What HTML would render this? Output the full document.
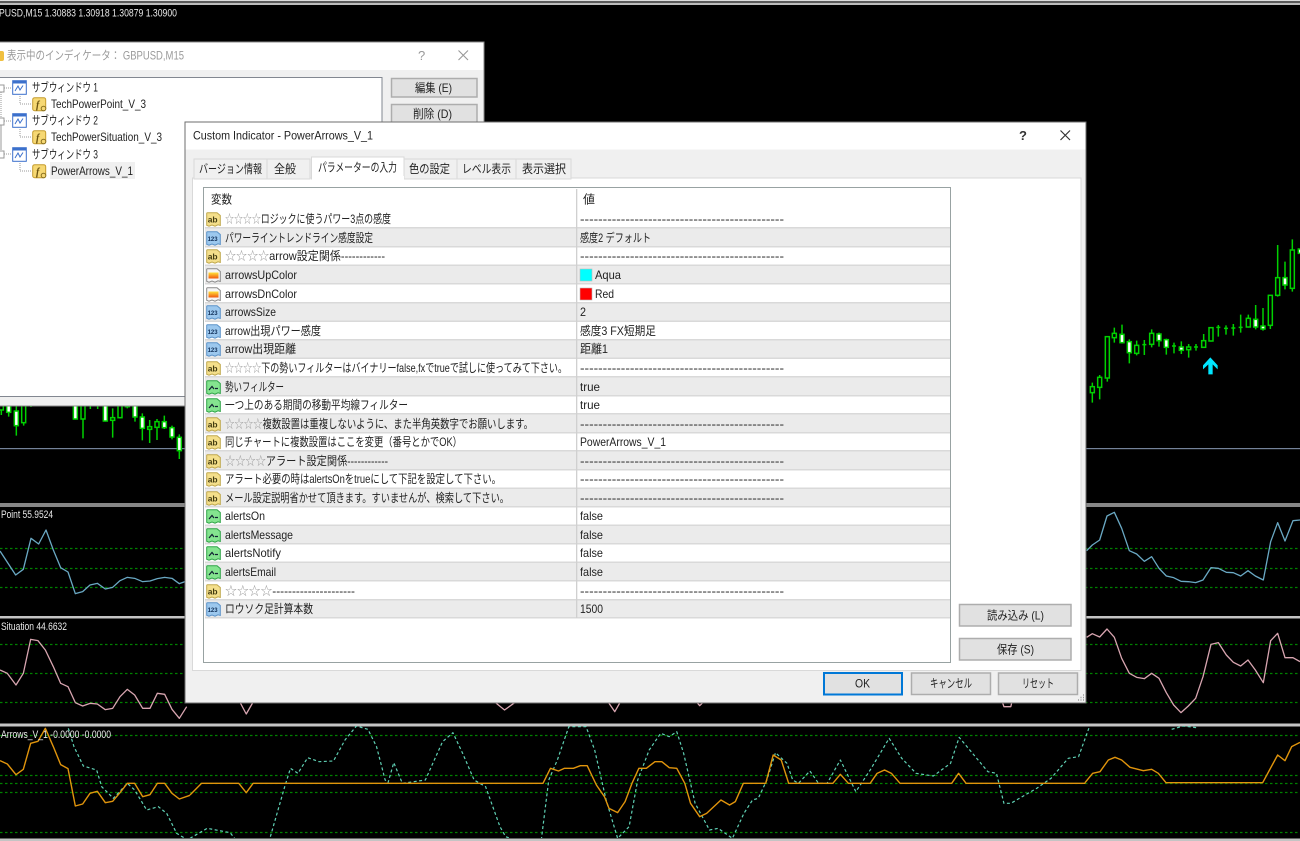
<!DOCTYPE html>
<html lang="ja"><head><meta charset="utf-8"><title>Custom Indicator - PowerArrows_V_1</title>
<style>
html,body{margin:0;padding:0;background:#000;width:1300px;height:841px;overflow:hidden}
svg{display:block;font-family:"Liberation Sans","Noto Sans CJK JP",sans-serif;font-size:12px;filter:blur(.35px)}
.l{fill:none;vector-effect:non-scaling-stroke;stroke-linejoin:round}
.g{stroke:#008000;stroke-width:1.2;stroke-dasharray:2.5 2.5}
.b{stroke:#6aa9c4;stroke-width:1.3}
.p{stroke:#d8a5b0;stroke-width:1.3}
.o{stroke:#e0940c;stroke-width:1.4}
.t{stroke:#5fd0b4;stroke-width:1.2;stroke-dasharray:3 2.5}
.w{fill:none;stroke:#00d000;stroke-width:4.5}
.h{fill:#000;stroke:#00d000;stroke-width:4.5}
.f{fill:#fff;stroke:#00d000;stroke-width:4.5}
.k text{fill:#e8e8e8;font-size:11px}
.r text,.d{fill:#222}
.btn{fill:#e1e1e1;stroke:#adadad;stroke-width:1.5}
.tab{fill:#f0f0f0;stroke:#d9d9d9}
</style></head><body>
<svg width="1300" height="841" viewBox="0 0 1300 841" xmlns="http://www.w3.org/2000/svg">
<defs>
<clipPath id="c1"><rect x="0" y="507" width="1300" height="109"/></clipPath>
<clipPath id="c2"><rect x="0" y="618" width="1300" height="105"/></clipPath>
<clipPath id="c3"><rect x="0" y="726" width="1300" height="112"/></clipPath>
<linearGradient id="gr" x1="0" y1="0" x2="0" y2="1"><stop offset="0" stop-color="#ffe23a"/><stop offset="1" stop-color="#f2560e"/></linearGradient>
<symbol id="ab" viewBox="0 0 15 15"><path d="M.7 1.5Q.7.7 1.5.7H11L14.3 3.5V13.5L12 12.8 9 14.2 6 13 3 14.2.7 13.3Z" fill="#f4df8b" stroke="#c0a84c"/><text x="1.7" y="10.3" font-size="8.5" font-weight="bold" fill="#433c10">ab</text></symbol>
<symbol id="n" viewBox="0 0 15 15"><path d="M.7 1.5Q.7.7 1.5.7H11L14.3 3.5V13.5L12 12.8 9 14.2 6 13 3 14.2.7 13.3Z" fill="#9cc8ee" stroke="#5b93c9"/><text x="1.6" y="10" font-size="6" font-weight="bold" fill="#10305a">123</text></symbol>
<symbol id="c" viewBox="0 0 15 15"><path d="M.7 1.5Q.7.7 1.5.7H11L14.3 3.5V13.5L12 12.8 9 14.2 6 13 3 14.2.7 13.3Z" fill="#f6f6f6" stroke="#8a8a8a"/><rect x="2.5" y="4.5" width="10" height="6" fill="url(#gr)"/></symbol>
<symbol id="v" viewBox="0 0 15 15"><path d="M.7 1.5Q.7.7 1.5.7H11L14.3 3.5V13.5L12 12.8 9 14.2 6 13 3 14.2.7 13.3Z" fill="#84e48f" stroke="#2fa548"/><path d="M3 10 6 6.5 8 9M9 8.5H12" fill="none" stroke="#123" stroke-width="1.2"/></symbol>
<symbol id="fn" viewBox="0 0 15 15"><rect x=".7" y=".7" width="13" height="13" rx="2" fill="#f6d873" stroke="#c49b2c"/><text x="4" y="11" font-size="10" font-style="italic" font-weight="bold" fill="#6b5310" font-family="Liberation Serif">f</text><circle cx="11.5" cy="11.5" r="2.3" fill="#f6d873" stroke="#8a7020"/></symbol>
<symbol id="win" viewBox="0 0 15 15"><rect x=".7" y=".7" width="13.6" height="13.6" fill="#fff" stroke="#3b70cc"/><rect x="1" y="1" width="13" height="2.5" fill="#3b70cc"/><path d="M3 11 6 6 8 10 11 5.5" fill="none" stroke="#3b70cc"/></symbol>
</defs>

<rect width="1300" height="841" fill="#000"/>
<!-- top bars -->
<rect y="0" width="1300" height="1" fill="#ddd"/><rect y="1" width="1300" height="2" fill="#5a5a5a"/><rect y="3" width="1300" height="2" fill="#bdbdbd"/>
<g class="k"><text x="-1" y="16.5" textLength="178" lengthAdjust="spacingAndGlyphs">PUSD,M15  1.30883 1.30918 1.30879 1.30900</text></g>

<!-- main chart -->
<rect x="0" y="448" width="1300" height="1.2" fill="#74839a"/>
<g transform="translate(0,395) scale(.33333)">
<path class="w" d="M4 0V60M26 0V65M49 0V122M71 0V92M93 0V36M226 0V74M249 0V130M271 0V42M293 0V42M316 0V80M338 40V128M360 0V70M382 0V40M405 0V80M427 55V136M449 75V144M471 72V135M493 62V102M516 92V133M538 118V192"/>
<rect class="h" x="-2" y="0" width="12" height="45"/><rect class="f" x="20" y="0" width="12" height="52"/><rect class="f" x="43" y="48" width="12" height="44"/><rect class="h" x="65" y="0" width="12" height="83"/>
<rect class="f" x="220" y="0" width="12" height="72"/><rect class="h" x="243" y="0" width="12" height="72"/><rect class="f" x="310" y="0" width="12" height="78"/><rect class="h" x="332" y="68" width="12" height="8"/><rect class="h" x="354" y="0" width="12" height="68"/><rect class="h" x="376" y="0" width="12" height="35"/><rect class="f" x="399" y="0" width="12" height="66"/><rect class="f" x="421" y="66" width="12" height="34"/><rect class="h" x="443" y="95" width="12" height="8"/><rect class="h" x="465" y="80" width="12" height="17"/><rect class="f" x="487" y="80" width="12" height="18"/><rect class="f" x="510" y="98" width="12" height="28"/><rect class="f" x="532" y="127" width="12" height="40"/>
</g>
<g transform="translate(1085,230) scale(.33333)">
<path class="w" d="M22 458V518M44 435V508M67 318V455M88 293V338M111 284V340M133 328V400M155 332V376M178 330V375M200 298V352M222 308V350M244 326V374M267 338V370M289 334V372M311 342V383M333 342V362M356 312V354M378 292V335M400 285V320M423 286V314M445 282V317M467 254V308M490 254V293M512 225V298M534 234V302M556 195V297M578 45V200M600 95V178M622 28V185"/>
<path class="w" d="M172 344H184M261 348H273M327 351H339M394 292H406M417 295H429M439 294H451M461 292H473"/>
<rect class="h" x="16" y="470" width="12" height="18"/><rect class="h" x="38" y="442" width="12" height="30"/><rect class="h" x="61" y="320" width="12" height="124"/><rect class="h" x="82" y="310" width="12" height="13"/><rect class="f" x="105" y="313" width="12" height="25"/><rect class="f" x="127" y="335" width="12" height="33"/><rect class="h" x="149" y="346" width="12" height="24"/><rect class="h" x="194" y="310" width="12" height="33"/><rect class="f" x="216" y="312" width="12" height="20"/><rect class="f" x="238" y="329" width="12" height="23"/><rect class="f" x="283" y="351" width="12" height="10"/><rect class="h" x="305" y="351" width="12" height="8"/><rect class="h" x="350" y="332" width="12" height="20"/><rect class="h" x="372" y="293" width="12" height="40"/><rect class="h" x="484" y="265" width="12" height="26"/><rect class="f" x="506" y="268" width="12" height="23"/><rect class="f" x="528" y="288" width="12" height="9"/><rect class="h" x="550" y="196" width="12" height="90"/><rect class="h" x="572" y="143" width="12" height="53"/><rect class="f" x="594" y="143" width="12" height="22"/><rect class="h" x="616" y="60" width="12" height="115"/><rect class="f" x="640" y="57" width="12" height="13"/>
<path d="M376 382 398 406V418L383 403V433H370V403L354 418V406Z" fill="#00e6ff"/>
</g>

<!-- separators -->
<rect y="503" width="1300" height="4" fill="#868686"/>
<rect y="616" width="1300" height="2.5" fill="#c4c4c4"/><rect y="723.5" width="1300" height="3" fill="#c4c4c4"/><rect y="838.5" width="1300" height="2.5" fill="#c4c4c4"/>

<!-- sub 1 -->
<path class="l g" d="M0 548.5H1300M0 568.5H1300M0 587.5H1300"/>
<g clip-path="url(#c1)">
<g transform="translate(0,400) scale(.33333)"><polyline class="l b" points="0,453 47,525 70,508 93,415 116,432 138,390 160,450 182,503 204,516 226,581 248,575 270,555 292,550 316,567 338,562 360,542 382,532 404,535 428,545 450,543 472,536 494,532 516,535 538,551 555,545"/></g>
<g transform="translate(1085,500) scale(.33333)"><polyline class="l b" points="5,152 22,135 44,120 66,48 88,37 110,85 133,152 155,162 178,184 200,170 222,205 244,228 266,233 288,244 310,245 332,248 354,240 378,203 400,205 424,217 445,218 467,228 489,212 511,228 535,240 557,125 578,68 600,123 624,62 645,60"/></g>
</g>
<g class="k"><text x="1" y="518" textLength="52" lengthAdjust="spacingAndGlyphs">Point 55.9524</text></g>

<!-- sub 2 -->
<path class="l g" d="M0 644.5H1300M0 673.5H1300M0 702.5H1300"/>
<g clip-path="url(#c2)">
<g transform="translate(0,400) scale(.33333)"><polyline class="l p" points="0,810 22,820 48,855 70,820 92,718 114,722 136,750 160,800 182,850 204,860 226,908 248,918 270,910 292,912 316,929 338,925 360,890 382,868 404,885 428,925 450,925 472,880 494,883 516,928 538,955 560,920"/></g>
<g transform="translate(1085,500) scale(.33333)"><polyline class="l p" points="5,412 22,401 44,411 66,387 88,412 110,475 133,520 155,532 178,536 200,520 222,535 244,578 266,615 288,638 310,618 332,595 354,530 378,433 400,428 424,465 445,487 467,498 489,480 511,510 535,548 557,422 578,400 600,473 624,473 645,485"/></g>
<g transform="translate(190,700) scale(.574,.33333)"><path class="l p" d="M85 0 98 42 112 0M530 5 548 30 568 5M728 5 740 35 750 5M882 5 888 17 895 5M1415 5 1418 20H1430L1432 5"/></g>
</g>
<g class="k"><text x="1" y="630" textLength="66" lengthAdjust="spacingAndGlyphs">Situation 44.6632</text></g>

<!-- sub 3 -->
<path class="l g" d="M0 735.5H1300M0 775.5H1300M0 783.5H1300M0 792.5H1300M0 832.5H1300"/>
<g clip-path="url(#c3)">
<g transform="translate(0,400) scale(.33333)">
<polyline class="l t" points="205,985 222,1040 250,1098 290,1110 305,1160 340,1195 382,1150 404,1170 440,1230 475,1220 500,1240 530,1300 555,1315"/>
<polyline class="l o" points="0,1082 22,1092 48,1124 70,1108 92,1030 114,1024 136,985 160,1040 182,1094 204,1106 226,1218 248,1212 270,1180 292,1174 316,1208 338,1204 360,1178 382,1150 404,1150 428,1190 450,1184 472,1150 494,1150 516,1180 538,1197 570,1186"/>
</g>
<g transform="translate(190,700) scale(.574,.33333)">
<polyline class="l t" points="0,415 30,385 70,398 80,420"/>
<polyline class="l t" points="140,410 150,350 165,260 175,205 188,220 205,173 225,185 250,183 270,120 290,78 310,88 325,140 340,240 345,248 355,188 370,250 410,240 440,125 458,98 475,160 495,240 515,260 540,380 550,410 565,420"/>
<polyline class="l t" points="612,420 625,240 640,180 660,80 690,80 705,150 725,300 745,415 765,380 780,240 800,150 820,100 835,110 848,95 860,160 880,310 905,390 920,385 945,415 965,340 980,300 990,295 1005,240 1020,158 1040,190 1050,240 1060,250 1080,213 1095,250 1110,250 1133,180 1160,275 1185,210 1218,115 1240,175 1265,220 1295,228 1325,190 1340,112 1390,215 1405,220 1418,310 1430,310 1475,265 1500,235 1530,175 1548,170 1568,75"/>
<polyline class="l o" points="0,285 20,250 85,250 98,278 110,250 615,250 628,205 642,213 652,205 668,205 680,197 692,197 708,255 722,290 730,325 745,338 758,305 770,250 782,205 795,205 810,185 822,185 835,203 848,205 862,250 872,310 888,350 900,340 925,300 940,315 950,305 964,250 1003,250 1016,165 1030,180 1043,250 1120,250 1133,223 1147,250 1185,250 1197,220 1210,210 1222,220 1237,250 1327,250 1339,220 1352,250 1560,250"/>
</g>
<g transform="translate(900,580) scale(.33333)">
<polyline class="l t" points="815,448 850,438 890,443"/>
<polyline class="l o" points="555,608 578,580 600,575 625,540 645,532 665,540 690,562 730,572 755,568 775,580 798,608 1088,608 1133,525 1155,542 1175,500 1200,487"/>
</g>
</g>
<g class="k"><text x="1" y="738" textLength="110" lengthAdjust="spacingAndGlyphs">Arrows_V_1 -0.0000 -0.0000</text></g>

<!-- small dialog -->
<rect x="-3" y="42" width="487" height="364" fill="#f0f0f0" stroke="#8a8a8a"/>
<rect x="-2" y="42.5" width="485.5" height="27.5" fill="#fff"/>
<rect x="-4" y="51" width="8" height="10" rx="2" fill="#f0c040"/>
<text x="7" y="59.500" textLength="177" lengthAdjust="spacingAndGlyphs" fill="#9a9a9a">表示中のインディケータ： GBPUSD,M15</text>
<text x="418" y="60" fill="#999" font-size="13">?</text>
<path d="M458.500 50.500 468 60M468 50.500 458.500 60" stroke="#999" stroke-width="1.100" fill="none"/>
<rect x="-3" y="77.500" width="385" height="319" fill="#fff" stroke="#828790"/>
<rect x="391.500" y="78.500" width="85.500" height="18.500" class="btn"/><text class="d" x="415" y="92" textLength="37" lengthAdjust="spacingAndGlyphs">編集 (E)</text>
<rect x="391.500" y="104.500" width="85.500" height="19" class="btn"/><text class="d" x="413" y="118" textLength="39" lengthAdjust="spacingAndGlyphs">削除 (D)</text>
<path d="M1 92V150M1 125V158M4 88H12M4 121H12M4 154H12M20 96V104H32M20 129V137H32M20 163V171H32" stroke="#999" stroke-dasharray="1 1" fill="none"/>
<rect x="-3" y="85" width="7" height="7" fill="#fff" stroke="#999"/><rect x="-3" y="118" width="7" height="7" fill="#fff" stroke="#999"/><rect x="-3" y="151" width="7" height="7" fill="#fff" stroke="#999"/>
<use href="#win" x="12" y="80" width="15" height="15"/><use href="#win" x="12" y="113" width="15" height="15"/><use href="#win" x="12" y="147" width="15" height="15"/>
<use href="#fn" x="32" y="97" width="15" height="15"/><use href="#fn" x="32" y="130" width="15" height="15"/><use href="#fn" x="32" y="164" width="15" height="15"/>
<rect x="50" y="162" width="85" height="17" fill="#f0f0f0"/>
<g class="r">
<text x="32" y="91.500" textLength="66" lengthAdjust="spacingAndGlyphs">サブウィンドウ 1</text>
<text x="51" y="108" textLength="95" lengthAdjust="spacingAndGlyphs">TechPowerPoint_V_3</text>
<text x="32" y="124.500" textLength="66" lengthAdjust="spacingAndGlyphs">サブウィンドウ 2</text>
<text x="51" y="141" textLength="111" lengthAdjust="spacingAndGlyphs">TechPowerSituation_V_3</text>
<text x="32" y="158.500" textLength="66" lengthAdjust="spacingAndGlyphs">サブウィンドウ 3</text>
<text x="51" y="175" textLength="82" lengthAdjust="spacingAndGlyphs">PowerArrows_V_1</text>
</g>

<!-- big dialog -->
<rect x="185" y="122" width="901" height="581" fill="#f0f0f0" stroke="#6e6e6e" stroke-width="1"/>
<rect x="185.500" y="122.500" width="900" height="27" fill="#fff"/>
<text class="d" x="193" y="139.500" textLength="180" lengthAdjust="spacingAndGlyphs">Custom Indicator - PowerArrows_V_1</text>
<text x="1019" y="140" fill="#333" font-size="13" font-weight="bold">?</text>
<path d="M1060.500 130.500 1070 140M1070 130.500 1060.500 140" stroke="#333" stroke-width="1.200" fill="none"/>
<rect x="192.500" y="178" width="888.500" height="492.500" fill="#fff" stroke="#d9d9d9"/>
<rect class="tab" x="194" y="159" width="73" height="20"/><rect class="tab" x="267" y="159" width="43" height="20"/><rect class="tab" x="404" y="159" width="53" height="20"/><rect class="tab" x="457" y="159" width="59" height="20"/><rect class="tab" x="516" y="159" width="55" height="20"/>
<path d="M311.500 179.500V157H404V179.500" fill="#fff" stroke="#d9d9d9"/>
<rect x="312" y="176" width="92" height="4" fill="#fff"/>
<g class="r">
<text x="199" y="173" textLength="63" lengthAdjust="spacingAndGlyphs">バージョン情報</text>
<text x="274" y="173" textLength="22" lengthAdjust="spacingAndGlyphs">全般</text>
<text x="318" y="171.500" textLength="79" lengthAdjust="spacingAndGlyphs">パラメーターの入力</text>
<text x="409" y="173" textLength="41" lengthAdjust="spacingAndGlyphs">色の設定</text>
<text x="462" y="173" textLength="49" lengthAdjust="spacingAndGlyphs">レベル表示</text>
<text x="522" y="173" textLength="44" lengthAdjust="spacingAndGlyphs">表示選択</text>
</g>

<!-- list -->
<rect x="203.500" y="187.500" width="747" height="475" fill="#fff" stroke="#98a2a2" stroke-width="1"/>
<g fill="#ebebeb">
<rect x="205" y="228" width="745" height="19"/><rect x="205" y="266" width="745" height="18"/><rect x="205" y="303" width="745" height="18"/><rect x="205" y="340" width="745" height="19"/><rect x="205" y="377" width="745" height="19"/><rect x="205" y="414" width="745" height="19"/><rect x="205" y="451" width="745" height="19"/><rect x="205" y="489" width="745" height="18"/><rect x="205" y="526" width="745" height="18"/><rect x="205" y="563" width="745" height="18"/><rect x="205" y="600" width="745" height="18"/>
</g>
<g fill="#d9d9d9">
<rect x="205" y="227" width="745" height="1.500"/><rect x="205" y="246" width="745" height="1.500"/><rect x="205" y="264.500" width="745" height="1.500"/><rect x="205" y="283" width="745" height="1.500"/><rect x="205" y="302" width="745" height="1.500"/><rect x="205" y="320.500" width="745" height="1.500"/><rect x="205" y="339" width="745" height="1.500"/><rect x="205" y="357.500" width="745" height="1.500"/><rect x="205" y="376" width="745" height="1.500"/><rect x="205" y="395" width="745" height="1.500"/><rect x="205" y="413" width="745" height="1.500"/><rect x="205" y="432" width="745" height="1.500"/><rect x="205" y="450" width="745" height="1.500"/><rect x="205" y="469" width="745" height="1.500"/><rect x="205" y="487.500" width="745" height="1.500"/><rect x="205" y="506" width="745" height="1.500"/><rect x="205" y="524.500" width="745" height="1.500"/><rect x="205" y="543" width="745" height="1.500"/><rect x="205" y="561.500" width="745" height="1.500"/><rect x="205" y="580" width="745" height="1.500"/><rect x="205" y="599" width="745" height="1.500"/><rect x="205" y="617" width="745" height="1.500"/>
</g>
<rect x="576" y="189" width="1.300" height="429" fill="#d0d0d0"/>
<use href="#ab" x="206" y="212" width="15" height="15"/><use href="#n" x="206" y="231" width="15" height="15"/><use href="#ab" x="206" y="249" width="15" height="15"/><use href="#c" x="206" y="268" width="15" height="15"/><use href="#c" x="206" y="287" width="15" height="15"/><use href="#n" x="206" y="305" width="15" height="15"/><use href="#n" x="206" y="324" width="15" height="15"/><use href="#n" x="206" y="342" width="15" height="15"/><use href="#ab" x="206" y="361" width="15" height="15"/><use href="#v" x="206" y="380" width="15" height="15"/><use href="#v" x="206" y="398" width="15" height="15"/><use href="#ab" x="206" y="417" width="15" height="15"/><use href="#ab" x="206" y="435" width="15" height="15"/><use href="#ab" x="206" y="454" width="15" height="15"/><use href="#ab" x="206" y="472" width="15" height="15"/><use href="#ab" x="206" y="491" width="15" height="15"/><use href="#v" x="206" y="509" width="15" height="15"/><use href="#v" x="206" y="528" width="15" height="15"/><use href="#v" x="206" y="546" width="15" height="15"/><use href="#v" x="206" y="565" width="15" height="15"/><use href="#ab" x="206" y="584" width="15" height="15"/><use href="#n" x="206" y="602" width="15" height="15"/>
<g class="r">
<text x="211" y="203.500" textLength="21" lengthAdjust="spacingAndGlyphs">変数</text>
<text x="583" y="203.500" textLength="12" lengthAdjust="spacingAndGlyphs">値</text>
<text x="225" y="223" textLength="166" lengthAdjust="spacingAndGlyphs"><tspan fill="#999">☆☆☆☆</tspan>ロジックに使うパワー3点の感度</text>
<text x="225" y="242" textLength="148" lengthAdjust="spacingAndGlyphs">パワーライントレンドライン感度設定</text>
<text x="225" y="260" textLength="160" lengthAdjust="spacingAndGlyphs"><tspan fill="#999">☆☆☆☆</tspan>arrow設定関係------------</text>
<text x="225" y="279" textLength="72" lengthAdjust="spacingAndGlyphs">arrowsUpColor</text>
<text x="225" y="298" textLength="72" lengthAdjust="spacingAndGlyphs">arrowsDnColor</text>
<text x="225" y="316" textLength="51" lengthAdjust="spacingAndGlyphs">arrowsSize</text>
<text x="225" y="335" textLength="96" lengthAdjust="spacingAndGlyphs">arrow出現パワー感度</text>
<text x="225" y="353" textLength="71" lengthAdjust="spacingAndGlyphs">arrow出現距離</text>
<text x="225" y="372" textLength="342" lengthAdjust="spacingAndGlyphs"><tspan fill="#999">☆☆☆☆</tspan>下の勢いフィルターはバイナリーfalse,fxでtrueで試しに使ってみて下さい。</text>
<text x="225" y="391" textLength="59" lengthAdjust="spacingAndGlyphs">勢いフィルター</text>
<text x="225" y="409" textLength="183" lengthAdjust="spacingAndGlyphs">一つ上のある期間の移動平均線フィルター</text>
<text x="225" y="428" textLength="308" lengthAdjust="spacingAndGlyphs"><tspan fill="#999">☆☆☆☆</tspan>複数設置は重複しないように、また半角英数字でお願いします。</text>
<text x="225" y="446" textLength="237" lengthAdjust="spacingAndGlyphs">同じチャートに複数設置はここを変更（番号とかでOK）</text>
<text x="225" y="465" textLength="163" lengthAdjust="spacingAndGlyphs"><tspan fill="#999">☆☆☆☆</tspan>アラート設定関係------------</text>
<text x="225" y="483" textLength="276" lengthAdjust="spacingAndGlyphs">アラート必要の時はalertsOnをtrueにして下記を設定して下さい。</text>
<text x="225" y="502" textLength="284" lengthAdjust="spacingAndGlyphs">メール設定説明省かせて頂きます。すいませんが、検索して下さい。</text>
<text x="225" y="520" textLength="40" lengthAdjust="spacingAndGlyphs">alertsOn</text>
<text x="225" y="539" textLength="68" lengthAdjust="spacingAndGlyphs">alertsMessage</text>
<text x="225" y="557" textLength="56" lengthAdjust="spacingAndGlyphs">alertsNotify</text>
<text x="225" y="576" textLength="51" lengthAdjust="spacingAndGlyphs">alertsEmail</text>
<text x="225" y="595" textLength="130" lengthAdjust="spacingAndGlyphs"><tspan fill="#999">☆☆☆☆</tspan>---------------------</text>
<text x="225" y="613" textLength="88" lengthAdjust="spacingAndGlyphs">ロウソク足計算本数</text>

<text x="580" y="223" textLength="204" lengthAdjust="spacingAndGlyphs">---------------------------------------------</text>
<text x="580" y="242" textLength="71" lengthAdjust="spacingAndGlyphs">感度2 デフォルト</text>
<text x="580" y="260" textLength="204" lengthAdjust="spacingAndGlyphs">---------------------------------------------</text>
<text x="595" y="279" textLength="26" lengthAdjust="spacingAndGlyphs">Aqua</text>
<text x="595" y="298" textLength="19" lengthAdjust="spacingAndGlyphs">Red</text>
<text x="580" y="316" textLength="6" lengthAdjust="spacingAndGlyphs">2</text>
<text x="580" y="335" textLength="76" lengthAdjust="spacingAndGlyphs">感度3 FX短期足</text>
<text x="580" y="353" textLength="28" lengthAdjust="spacingAndGlyphs">距離1</text>
<text x="580" y="372" textLength="204" lengthAdjust="spacingAndGlyphs">---------------------------------------------</text>
<text x="580" y="391" textLength="20" lengthAdjust="spacingAndGlyphs">true</text>
<text x="580" y="409" textLength="20" lengthAdjust="spacingAndGlyphs">true</text>
<text x="580" y="428" textLength="204" lengthAdjust="spacingAndGlyphs">---------------------------------------------</text>
<text x="580" y="446" textLength="86" lengthAdjust="spacingAndGlyphs">PowerArrows_V_1</text>
<text x="580" y="465" textLength="204" lengthAdjust="spacingAndGlyphs">---------------------------------------------</text>
<text x="580" y="483" textLength="204" lengthAdjust="spacingAndGlyphs">---------------------------------------------</text>
<text x="580" y="502" textLength="204" lengthAdjust="spacingAndGlyphs">---------------------------------------------</text>
<text x="580" y="520" textLength="23" lengthAdjust="spacingAndGlyphs">false</text>
<text x="580" y="539" textLength="23" lengthAdjust="spacingAndGlyphs">false</text>
<text x="580" y="557" textLength="23" lengthAdjust="spacingAndGlyphs">false</text>
<text x="580" y="576" textLength="23" lengthAdjust="spacingAndGlyphs">false</text>
<text x="580" y="595" textLength="204" lengthAdjust="spacingAndGlyphs">---------------------------------------------</text>
<text x="580" y="613" textLength="23" lengthAdjust="spacingAndGlyphs">1500</text>
</g>
<rect x="580" y="269" width="12" height="12" fill="#00ffff" stroke="#bbb" stroke-width=".6"/>
<rect x="580" y="288" width="12" height="12" fill="#ff0000" stroke="#bbb" stroke-width=".6"/>

<!-- buttons -->
<rect class="btn" x="959.500" y="604.500" width="111.500" height="21.500"/><text class="d" x="987" y="619.500" textLength="57" lengthAdjust="spacingAndGlyphs">読み込み (L)</text>
<rect class="btn" x="959.500" y="638.500" width="111.500" height="21.500"/><text class="d" x="997" y="653.500" textLength="37" lengthAdjust="spacingAndGlyphs">保存 (S)</text>
<rect x="824" y="673" width="78" height="21.500" fill="#e1e1e1" stroke="#0078d7" stroke-width="2"/><text class="d" x="855" y="687.500" textLength="15" lengthAdjust="spacingAndGlyphs">OK</text>
<rect class="btn" x="911.500" y="673" width="79" height="21.500"/><text class="d" x="930" y="687.500" textLength="42" lengthAdjust="spacingAndGlyphs">キャンセル</text>
<rect class="btn" x="998.500" y="673" width="79" height="21.500"/><text class="d" x="1022" y="687.500" textLength="32" lengthAdjust="spacingAndGlyphs">リセット</text>
<path d="M1083 695h1M1080.500 697.500h1M1083 697.500h1M1078 700h1M1080.500 700h1M1083 700h1" stroke="#999" stroke-width="1.500"/>
</svg>
</body></html>
